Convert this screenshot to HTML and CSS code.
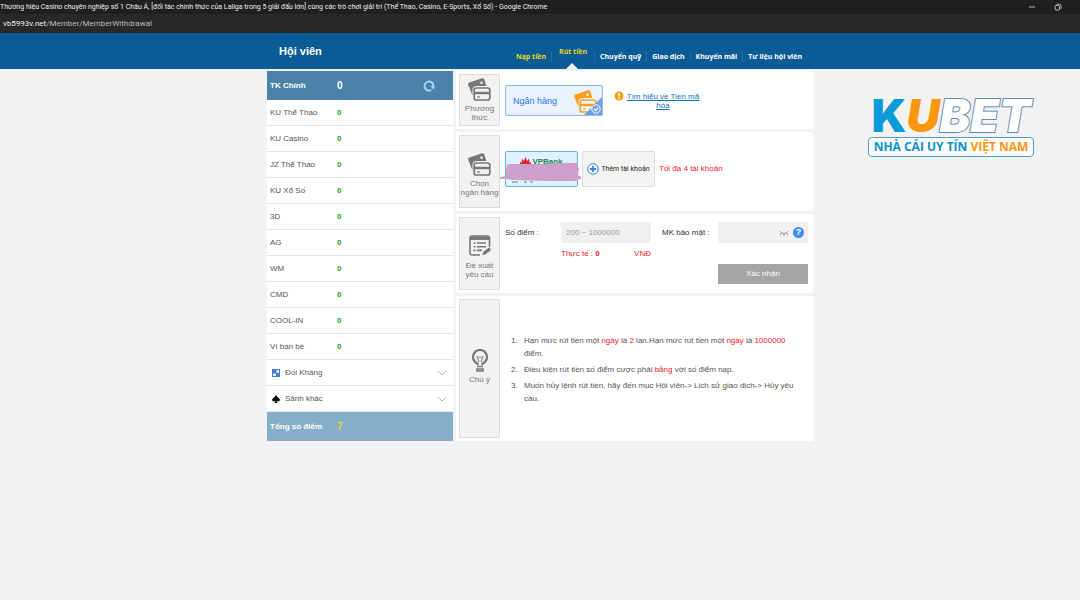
FILE: index.html
```
<!DOCTYPE html>
<html lang="vi">
<head>
<meta charset="utf-8">
<title>Hội viên - Rút tiền</title>
<link rel="stylesheet" href="styles.css">
</head>
<body>
<svg class="defs" aria-hidden="true">
  <symbol id="cards" viewBox="0 0 23 23">
    <path d="M.8 4.800 14 .3q1.600-.4 2.200 1L18.400 8H9Q4.500 8 4.500 12v5.500L.3 7Q-.2 5.300.8 4.800Z" fill="currentColor"/>
    <path d="m12 4 2.200-.7.8 2.200-2.200.6Z" fill="#f2f2f2"/>
    <rect x="6.200" y="10" width="15.600" height="12" rx="2" fill="none" stroke="currentColor" stroke-width="1.700"/>
    <path d="M6.200 15h15.600" stroke="currentColor" stroke-width="2.400"/>
    <path d="M9 19h3" stroke="currentColor" stroke-width="1.200"/>
  </symbol>
</svg>
<header class="window-bar">
  <span class="window-title">Thương hiệu Casino chuyên nghiệp số 1 Châu Á, [đối tác chính thức của Laliga trong 5 giải đấu lớn] cùng các trò chơi giải trí (Thể Thao, Casino, E-Sports, Xổ Số) - Google Chrome</span>
  <span class="window-controls">
    <svg width="8" height="8" viewBox="0 0 8 8"><path d="M1 4h6" stroke="#bbb"/></svg>
    <svg width="8" height="8" viewBox="0 0 8 8" fill="none" stroke="#bbb"><rect x="1" y="2.500" width="4.500" height="4.500" rx="1"/><path d="M2.500 1.200H5.500Q7 1.200 7 2.700v3"/></svg>
  </span>
</header>
<div class="address-bar">vb5993v.net<span>/Member/MemberWithdrawal</span></div>
<div class="top">
  <div class="top-inner">
    <h1>Hội viên</h1>
    <nav>
      <a class="gold" href="#">Nạp tiền</a>
      <a class="gold current" href="#">Rút tiền</a>
      <a href="#">Chuyển quỹ</a>
      <a href="#">Giao dịch</a>
      <a href="#">Khuyến mãi</a>
      <a href="#">Tư liệu hội viên</a>
    </nav>
  </div>
</div>
<main class="page">
  <aside class="wallet">
    <div class="main-account"><span>TK Chính</span><b>0</b>
      <button type="button" aria-label="Làm mới"><svg width="12" height="12" viewBox="0 0 12 12"><path d="M8.300 9.900A4.500 4.500 0 1 1 10.500 6" fill="none" stroke="#a9dcfb" stroke-width="1.800"/><path d="M7.600 6.300 12 6l-1.800 3.600Z" fill="#a9dcfb"/></svg></button>
    </div>
    <div class="row"><span>KU Thể Thao</span><b>0</b></div>
    <div class="row"><span>KU Casino</span><b>0</b></div>
    <div class="row"><span>JZ Thể Thao</span><b>0</b></div>
    <div class="row"><span>KU Xổ Số</span><b>0</b></div>
    <div class="row"><span>3D</span><b>0</b></div>
    <div class="row"><span>AG</span><b>0</b></div>
    <div class="row"><span>WM</span><b>0</b></div>
    <div class="row"><span>CMD</span><b>0</b></div>
    <div class="row"><span>COOL-IN</span><b>0</b></div>
    <div class="row"><span>Ví bạn bè</span><b>0</b></div>
    <button type="button" class="row group">
      <svg width="8" height="8" viewBox="0 0 8 8"><path d="M0 0h8v8H0Z" fill="#3f7fc9"/><path d="M4.500 1H7v3H4.500ZM1 4.500h3V7H1Z" fill="#e8f2ff"/></svg>
      <span>Đối Kháng</span>
      <svg class="chevron" width="10" height="6" viewBox="0 0 10 6"><path d="m1 1 4 4 4-4" fill="none" stroke="#b5b5b5"/></svg>
    </button>
    <button type="button" class="row group">
      <svg width="8" height="8" viewBox="0 0 8 8"><path d="M4 0Q5 1.800 7.300 3.500q1.400 1.500-.3 2.700-1.200.5-2.400-.4L5.400 8H2.600l.8-2.200Q2.200 6.700 1 6.200-.7 5 .7 3.500 3 1.800 4 0Z" fill="#111"/></svg>
      <span>Sảnh khác</span>
      <svg class="chevron" width="10" height="6" viewBox="0 0 10 6"><path d="m1 1 4 4 4-4" fill="none" stroke="#b5b5b5"/></svg>
    </button>
    <div class="total"><span>Tổng số điểm</span><b>7</b></div>
  </aside>
  <form class="withdraw">
    <section class="panel">
      <h2 class="tile"><svg width="23" height="23"><use href="#cards"/></svg>Phương<br>thức</h2>
      <div class="content method">
        <button type="button" class="method-choice">Ngân hàng
          <svg class="orange" width="23" height="23"><use href="#cards"/></svg>
          <svg class="corner" width="18" height="18" viewBox="0 0 18 18"><path d="M18 0v18H0Z" fill="#6f9fe8"/><circle cx="12" cy="12" r="4.200" fill="#6f9fe8" stroke="#fff"/><path d="m10 12 1.600 1.600 2.600-3" fill="none" stroke="#fff" stroke-width="1.200"/></svg>
        </button>
        <svg class="warn" width="10" height="10" viewBox="0 0 10 10"><circle cx="5" cy="5" r="4.500" fill="#f9a01b"/><path d="M5 2v3.600M5 6.700v1.400" stroke="#fff" stroke-width="1.400"/></svg>
        <a class="learn" href="#">Tìm hiểu về Tiền mã hóa</a>
      </div>
    </section>
    <section class="panel">
      <h2 class="tile tall"><svg width="23" height="23"><use href="#cards"/></svg>Chọn<br>ngân hàng</h2>
      <div class="content banks">
        <button type="button" class="bank">
          <span class="bank-name"><svg width="11" height="10" viewBox="0 0 11 10"><path d="M5.500 9 4 4 5.500 0 7 4ZM5 9 1.500 6 2 1.500 4.600 5ZM6 9 9.500 6 9 1.500 6.400 5ZM4.500 9.500 0 8V5l3.500 2ZM6.500 9.500 11 8V5L7.500 7Z" fill="#e01f26"/></svg>VPBank</span>
          <svg class="scribble" width="82" height="24" viewBox="0 0 82 24"><path d="M12 21h6M24 21h3M30 21h3" stroke="#778"/><path d="M7 4 9 3 38 3 60 2 78 2 77 5 79 7 78 14 81 16 81 18 75 19 79 20 50 20 12 19 8 18 0 18 0 16 6 15 6 10Z" fill="#cd9fcd"/></svg>
        </button>
        <button type="button" class="add"><svg width="12" height="12" viewBox="0 0 12 12" fill="none" stroke="#3a83e0"><circle cx="6" cy="6" r="5.300"/><path d="M6 3v6M3 6h6" stroke-width="1.800"/></svg>Thêm tài khoản</button>
        <span class="red">Tối đa 4 tài khoản</span>
      </div>
    </section>
    <section class="panel">
      <h2 class="tile tall"><svg width="24" height="24" viewBox="0 0 24 24" fill="none" stroke="currentColor" stroke-width="1.600"><path d="M12 21H4q-2 0-2-2V4q0-2 2-2h15q2.500 0 2.500 2v9"/><path d="M2 4.200h19.500" stroke-width="3.500"/><path d="M5.500 9h2M9 9h9M5.500 12.700h2M9 12.700h9M5.500 16.400h2M9 16.400h5"/><path d="m14 21.500 1.200-4 6-4.500 2.200 3-6 4.700Z" fill="currentColor" stroke="#f2f2f2" stroke-width=".6"/></svg>Đề xuất<br>yêu cầu</h2>
      <div class="content request">
        <label for="points">Số điểm :</label>
        <div class="points-field">
          <input id="points" type="text" placeholder="200 ~ 1000000">
          <p class="actual red"><span>Thực tế : <b>0</b></span><span>VNĐ</span></p>
        </div>
        <label for="pin">MK bảo mật :</label>
        <div class="pin-field">
          <div class="pin-box">
            <input id="pin" type="password">
            <svg width="10" height="6" viewBox="0 0 10 6" fill="none" stroke="#999"><path d="M.5 1Q5 6 9.500 1M1 5l1.500-2M5 3.500V6M9 5 7.500 3"/></svg>
            <button class="help" type="button">?</button>
          </div>
          <button class="submit" type="submit">Xác nhận</button>
        </div>
      </div>
    </section>
    <section class="panel">
      <h2 class="tile notice"><svg width="18" height="23" viewBox="0 0 18 23" fill="none" stroke="currentColor"><path d="M6.500 16v-1.500A7 7 0 1 1 11.500 14.500V16" stroke-width="2.200"/><path d="M6 7.500 8 13M12 7.500 10 13M6 7.500 7.500 9 9 7.500 10.500 9 12 7.500"/><path d="M6 17.500h6M6 20h6v2H6Z" stroke-width="1.500"/></svg>Chú ý</h2>
      <ol class="content notes">
        <li>Hạn mức rút tiền một <em>ngày</em> là <em>2</em> lần.Hạn mức rút tiền một <em>ngày</em> là <em>1000000</em> điểm.</li>
        <li>Điều kiện rút tiền số điểm cược phải <em>bằng</em> với số điểm nạp.</li>
        <li>Muốn hủy lệnh rút tiền, hãy đến mục Hội viên-&gt; Lịch sử giao dịch-&gt; Hủy yêu cầu.</li>
      </ol>
    </section>
  </form>
  <div class="brand">
    <div class="brand-name"><span class="k">K</span><span class="u">U</span><span class="bet">BET</span></div>
    <div class="brand-line">NHÀ CÁI UY TÍN <span>VIỆT NAM</span></div>
  </div>
</main>
</body>
</html>
```
FILE: styles.css
```
* { box-sizing: border-box; }
body { margin: 0; background: #f2f2f2; color: #555; font: 8px/10px "Liberation Sans", Arial, sans-serif; }
button, input { font: inherit; color: inherit; margin: 0; padding: 0; border: 0; background: none; }
h1, h2, p, ol { margin: 0; padding: 0; }
a { color: inherit; text-decoration: none; }
svg { display: block; flex: none; }
.defs { display: none; }
.red, em { color: #fa1822; font-style: normal; }

.window-bar { height: 14px; background: #1f1f1f; color: #eee; display: flex; align-items: center; justify-content: space-between; font: 7px/14px Roboto, sans-serif; white-space: nowrap; }
.window-controls { display: flex; gap: 18px; padding-right: 18px; }
.address-bar { height: 19px; background: #282828; color: #eee; padding-left: 3px; font: 8px/20px Roboto, sans-serif; }
.address-bar span { color: #bbb; }

.top { background: #0b5c94; color: #fff; }
.top-inner { max-width: 546px; height: 36px; margin: 0 auto; padding: 0 11px 0 12px; display: flex; justify-content: space-between; }
h1 { font: bold 11px/36px "Liberation Sans", Arial, sans-serif; }
nav { display: flex; font: bold 7px/10px "Open Sans", sans-serif; padding-top: 19px; }
nav a { position: relative; height: 10px; }
nav a + a { margin-left: 5px; padding-left: 5px; border-left: 1px solid #226c9f; }
nav .gold { color: #e8d51c; }
nav .current { line-height: 0; padding-right: 2px; padding-left: 7px; }
nav .current::after { content: ""; position: absolute; left: 14px; top: 11px; border: 6px solid transparent; border-top: 0; border-bottom-color: #f2f2f2; }

.page { display: grid; grid-template-columns: 1fr 186px 3px 357px 1fr; padding-top: 2px; align-items: start; }
.wallet { grid-column: 2; }
.withdraw { grid-column: 4; display: grid; gap: 3px; }
.brand { grid-column: 5; }

.main-account, .total, .row { display: flex; align-items: center; width: 100%; padding: 0 3px; }
.main-account span, .total span, .row > span { width: 64px; }
.main-account { height: 29px; background: #4a82a9; color: #fff; font-weight: bold; }
.main-account b { flex: 1; margin-left: 3px; }
.main-account b, .total b { font-size: 10px; line-height: 12px; }
.main-account button { padding-right: 15px; }
.row { height: 26px; background: #fff; border-bottom: 1px solid #e2e2e2; text-align: left; }
.row b { color: #12ab28; margin-left: 3px; }
.row.group { padding: 0 6px 0 5px; gap: 5px; }
.row.group .chevron { margin-left: auto; }
.total { height: 29px; background: #86aec8; color: #fff; font-weight: bold; }
.total b { color: #f1d81b; margin-left: 3px; }

.panel { display: flex; background: #fff; padding: 3px; }
.tile { width: 41px; min-height: 52px; display: flex; flex-direction: column; align-items: center; justify-content: center; text-align: center; flex: none; background: #f2f2f2; border: 1px solid #ddd; color: #777; font: 8px/9px "Liberation Sans", Arial, sans-serif; white-space: nowrap; }
.tile svg { margin-bottom: 3px; }
.tile.tall { min-height: 73px; padding-top: 6px; }
.tile.notice { min-height: 139px; padding-bottom: 4px; }
.content { flex: 1; padding-left: 5px; display: flex; min-width: 0; }

.method { align-items: flex-start; padding-top: 11px; }
.method-choice { position: relative; width: 98px; height: 31px; background: #e9f3ff; border: 1px solid #8dbcea; border-radius: 2px; padding-left: 7px; text-align: left; color: #2a75e6; font-size: 9px; }
.orange { position: absolute; right: 5px; top: 4px; color: #f9a01b; }
.corner { position: absolute; right: 0; bottom: 0; }
.warn { margin: 6px 0 0 11px; }
.learn { width: 78px; text-align: center; color: #1673b1; text-decoration: underline; line-height: 9px; margin-top: 7px; }

.banks { padding-top: 16px; align-items: flex-start; gap: 4px; }
.bank, .add { width: 73px; height: 36px; border-radius: 2px; position: relative; }
.bank { background: #dff1fd; border: 1px solid #62b5ec; }
.bank-name { display: flex; justify-content: center; gap: 1px; align-items: center; color: #14844b; font-weight: bold; height: 19px; margin-bottom: 15px; }
.scribble { position: absolute; left: -6px; top: 9px; }
.add { background: #f4f4f4; border: 1px solid #ddd; display: flex; align-items: center; justify-content: center; gap: 2px; color: #222; font: 7px/10px Roboto, sans-serif; white-space: nowrap; }
.banks .red { line-height: 36px; }

.request { padding: 5px 2px 0 5px; color: #333; }
.request label { line-height: 21px; width: 56px; white-space: nowrap; }
.points-field { width: 90px; margin-right: 11px; }
.request input { width: 100%; height: 21px; background: #f0f0f0; padding: 0 5px; }
.request input::placeholder { color: #999; }
.actual { display: flex; justify-content: space-between; margin-top: 6px; }
.pin-field { flex: 1; min-width: 90px; }
.pin-box { display: flex; align-items: center; gap: 4px; background: #f0f0f0; padding-right: 4px; }
.pin-box input { flex: 1; min-width: 0; }
.help { width: 11px; height: 11px; border-radius: 50%; background: #3f8bee; color: #fff; font: bold 9px/11px "Liberation Sans", Arial, sans-serif; }
.submit { width: 100%; height: 20px; margin-top: 21px; background: #a5a5a5; color: #fff; border-radius: 1px; }

.notes { display: flex; flex-direction: column; justify-content: center; gap: 3px; padding: 2px 8px 0 24px; line-height: 13px; list-style: none; counter-reset: note; }
.notes li { counter-increment: note; position: relative; }
.notes li::before { content: counter(note) "."; position: absolute; left: -13px; }

.brand { padding: 23px 0 0 55px; width: 221px; font-family: Inter, sans-serif; }
.brand-name { font-weight: 900; font-size: 46px; line-height: 43px; display: flex; justify-content: center; }
.k { color: #0b9bd8; }
.u { color: #f9970f; font-style: italic; }
.bet { color: #fff; font-style: italic; -webkit-text-stroke: 2px #6489ac; paint-order: stroke; }
.brand-line { height: 20px; border: 1px solid #4a9fcb; border-radius: 4px; background: #fff; color: #0b90cb; font: 700 12px/18px "Open Sans", sans-serif; text-align: center; white-space: nowrap; }
.brand-line span { color: #f9970f; }
```
